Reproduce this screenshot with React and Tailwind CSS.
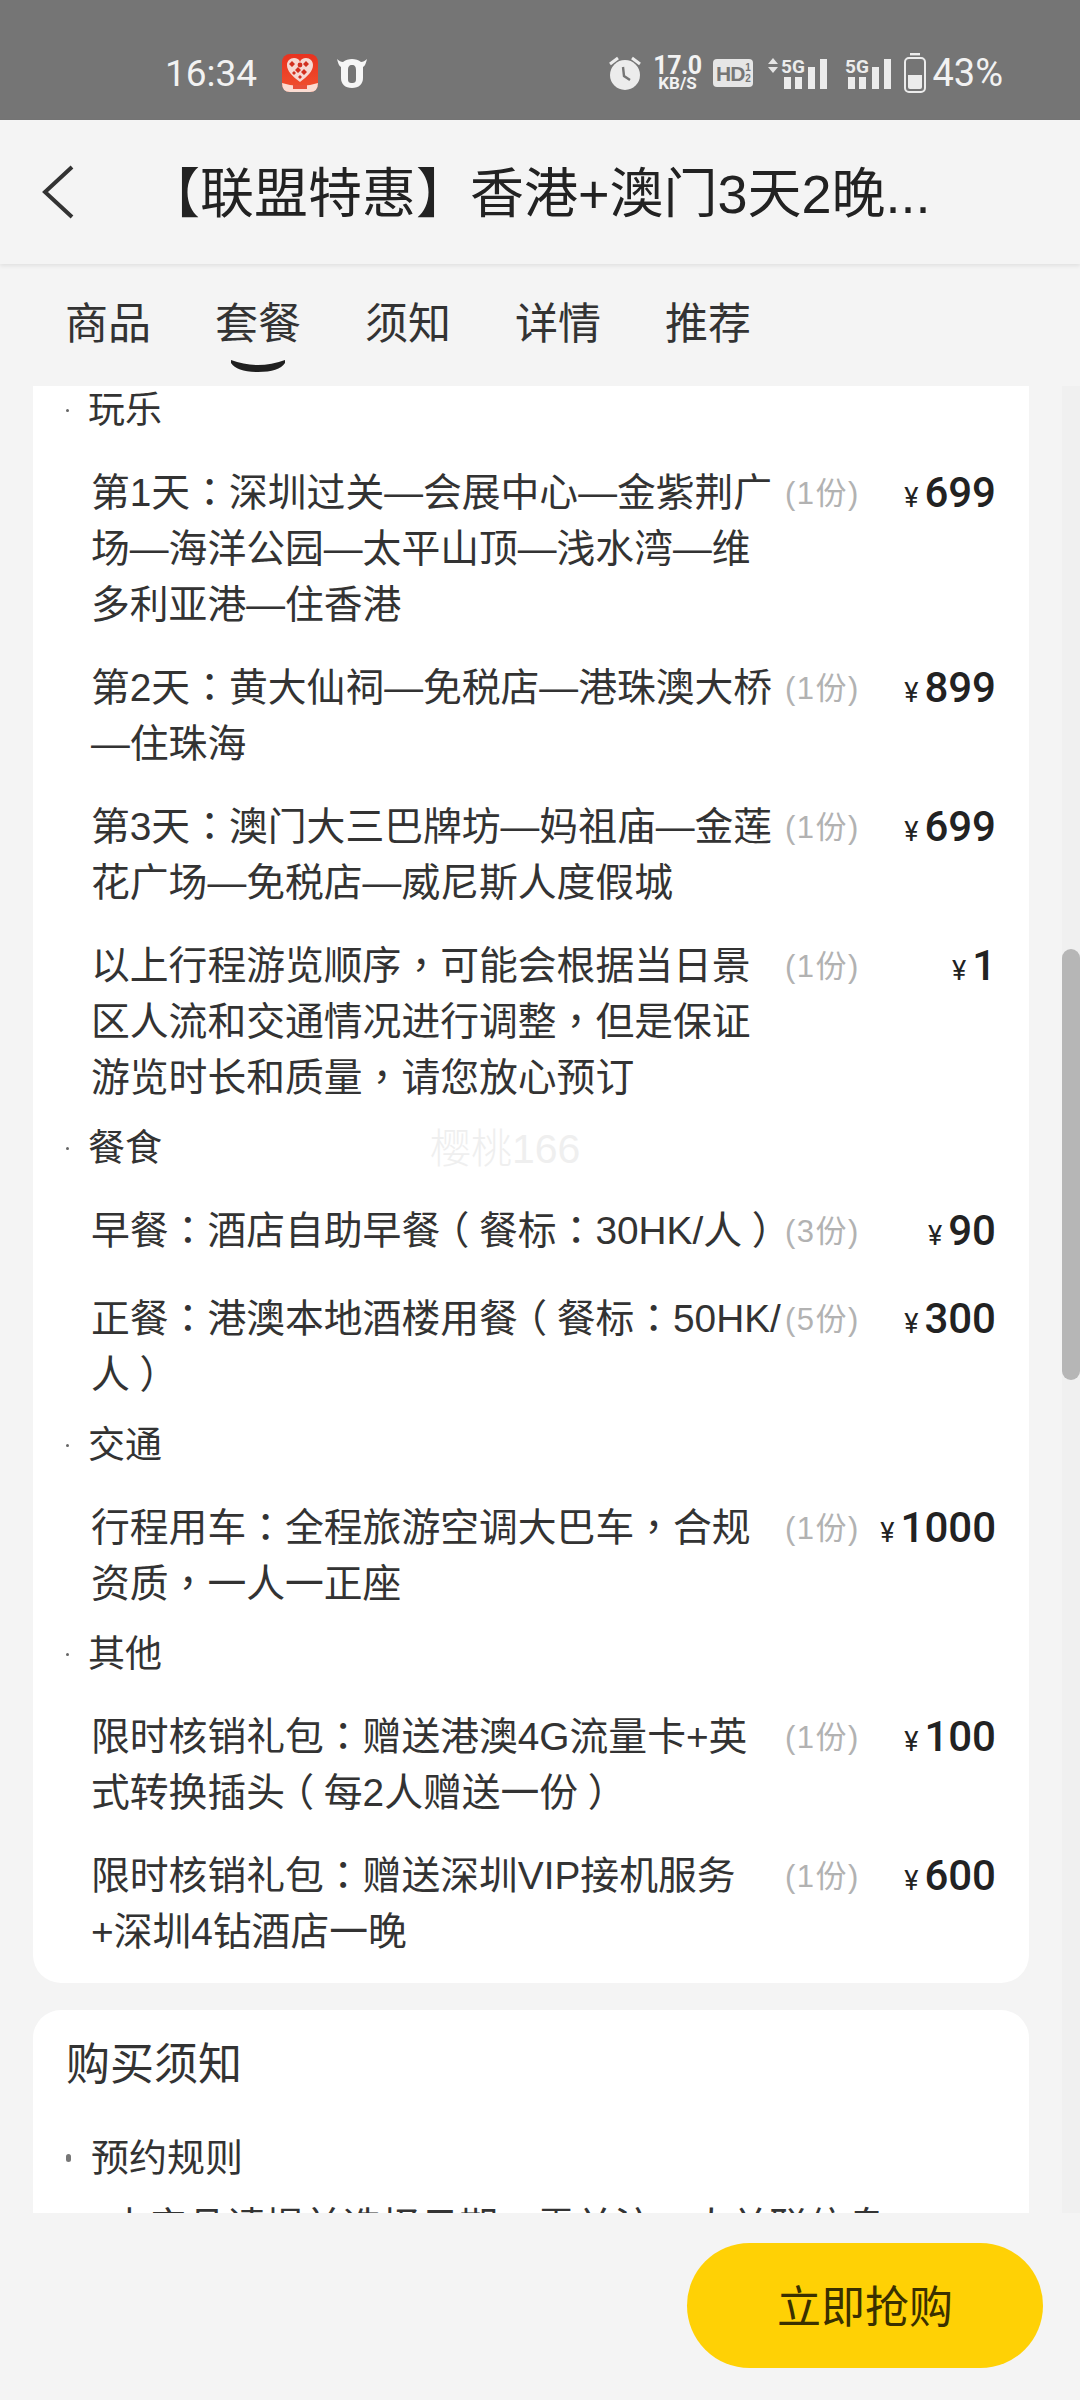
import React from 'react';

const groups = [
  {
    title: '玩乐',
    rows: [
      { text: '第1天：深圳过关—会展中心—金紫荆广场—海洋公园—太平山顶—浅水湾—维多利亚港—住香港', qty: 1, price: 699 },
      { text: '第2天：黄大仙祠—免税店—港珠澳大桥—住珠海', qty: 1, price: 899 },
      { text: '第3天：澳门大三巴牌坊—妈祖庙—金莲花广场—免税店—威尼斯人度假城', qty: 1, price: 699 },
      { text: '以上行程游览顺序，可能会根据当日景区人流和交通情况进行调整，但是保证游览时长和质量，请您放心预订', qty: 1, price: 1 },
    ],
  },
  {
    title: '餐食',
    rows: [
      { text: '早餐：酒店自助早餐（餐标：30HK/人）', qty: 3, price: 90 },
      { text: '正餐：港澳本地酒楼用餐（餐标：50HK/人）', qty: 5, price: 300 },
    ],
  },
  {
    title: '交通',
    rows: [{ text: '行程用车：全程旅游空调大巴车，合规资质，一人一正座', qty: 1, price: 1000 }],
  },
  {
    title: '其他',
    rows: [
      { text: '限时核销礼包：赠送港澳4G流量卡+英式转换插头（每2人赠送一份）', qty: 1, price: 100 },
      { text: '限时核销礼包：赠送深圳VIP接机服务+深圳4钻酒店一晚', qty: 1, price: 600 },
    ],
  },
];

// punctuation sits centred in the em box in the reference
const Punct = ({ text }) =>
  text.split(/([：，（）])/).map((part, i) => {
    if (part === '（') return <span key={i} className="relative -left-[0.25em]">{part}</span>;
    if (part === '）') return <span key={i} className="relative left-[0.25em]">{part}</span>;
    if (part === '：' || part === '，')
      return <span key={i} className="leading-none font-['Noto_Sans_CJK_TC']">{part}</span>;
    return part;
  });

const AppIcon = () => (
  <svg width="36" height="38" viewBox="0 0 36 38">
    <defs>
      <linearGradient id="red" x1="0" y1="0" x2="0" y2="1">
        <stop offset="0" stopColor="#e8321f" />
        <stop offset="1" stopColor="#f0522f" />
      </linearGradient>
    </defs>
    <rect width="36" height="38" rx="8" fill="url(#red)" />
    <path d="M0 29q18 6 36 0q0 9-8 9H8q-8 0-8-9z" fill="#fbdcd2" />
    <path d="M18 28C10 22 5 17 5 11c0-4 3-7 7-7 3 0 5 1 6 4 1-3 3-4 6-4 4 0 7 3 7 7 0 6-5 11-13 17z" fill="#f7d9d2" />
    <path d="M10 7l3 3-3 3-3-3zM16 13l3 3-3 3-3-3zM24 7l3 3-3 3-3-3zM22 15l3 3-3 3-3-3zM12 17l2 2-2 2-2-2zM18 21l2 2-2 2-2-2z" fill="#d2301f" />
    <circle cx="18" cy="11" r="2.4" fill="#d2301f" />
    <rect x="11" y="31" width="14" height="4" fill="#e8503a" />
  </svg>
);

const Cow = () => (
  <svg width="30" height="30" viewBox="0 0 30 30">
    <path
      fillRule="evenodd"
      d="M0 1c1 4 2 7 4 8v11c0 6 4 10 11 10s11-4 11-10V9c2-1 3-4 4-8-2 2-4 3-6 3-2-2-6-3-9-3S8 2 6 4C4 4 2 3 0 1zM15 7c3 0 4 2 4 5v9c0 3-1 4-4 4s-4-1-4-4v-9c0-3 1-5 4-5z"
      fill="#f6f6f6"
    />
  </svg>
);

const Alarm = () => (
  <svg width="32" height="34" viewBox="0 0 32 34">
    <circle cx="16" cy="19" r="15" fill="#ececec" />
    <path d="M14 11l1 9 6 4" fill="none" stroke="#757575" strokeWidth="2.4" />
    <path d="M1 8l8-6M31 8l-8-6" stroke="#ececec" strokeWidth="3" />
  </svg>
);

const Signal = ({ arrows }) => (
  <svg width={arrows ? 62 : 50} height="32" viewBox={`${arrows ? -16 : -2} 0 ${arrows ? 62 : 50} 32`}>
    {arrows && <path d="M-15 7l5-6 5 6zM-15 10l5 6 5-6z" fill="#e4e4e4" />}
    <text x="-2" y="16" fontSize="19" fontWeight="700" fill="#ececec" fontFamily="Roboto">
      5G
    </text>
    <rect x="1" y="20" width="7" height="12" fill="#ececec" />
    <rect x="12" y="20" width="7" height="12" fill="#ececec" />
    <rect x="25" y="10" width="7" height="22" fill="#ececec" />
    <rect x="37" y="2" width="7" height="30" fill="#ececec" />
  </svg>
);

const Battery = () => (
  <svg width="22" height="40" viewBox="0 0 22 40">
    <rect x="6" y="0" width="10" height="2.4" fill="#ececec" />
    <rect x="1" y="5" width="20" height="34" rx="4" fill="none" stroke="#ececec" strokeWidth="2" />
    <path d="M4 22h14v12a2 2 0 0 1-2 2H6a2 2 0 0 1-2-2z" fill="#ececec" />
  </svg>
);

const StatusBar = () => (
  <div className="h-[120px] shrink-0 bg-[#757575] flex items-center justify-between pt-[26px] pl-[165px] pr-[77px] text-[#f2f2f2] font-['Roboto']">
    <div className="flex items-center">
      <span className="text-[37px] leading-none w-[117px]">16:34</span>
      <AppIcon />
      <span className="ml-[19px] flex">
        <Cow />
      </span>
    </div>
    <div className="flex items-center">
      <Alarm />
      <div className="ml-[14px] w-[44px] flex flex-col items-center font-bold">
        <span className="text-[25px] leading-[21px] tracking-[-0.5px]">17.0</span>
        <span className="text-[17px] leading-[15px]">KB/S</span>
      </div>
      <div className="ml-[14px] w-[40px] h-[28px] rounded-[4px] bg-[#e6e6e6] text-[#757575] font-bold flex items-center justify-center font-['Liberation_Sans']">
        <span className="text-[21px] leading-none tracking-[-1px]">HD</span>
        <span className="text-[10px] leading-[11px] flex flex-col ml-[1px]">
          <span>1</span>
          <span>2</span>
        </span>
      </div>
      <div className="ml-[14px] flex">
        <Signal arrows />
      </div>
      <div className="ml-[16px] flex">
        <Signal />
      </div>
      <div className="ml-[9px] flex">
        <Battery />
      </div>
      <span className="ml-[6px] text-[38px] leading-none">43%</span>
    </div>
  </div>
);

const Row = ({ row }) => (
  <div className="flex items-start mt-[27px] pl-[58px] pr-[33px]">
    <div className="w-[692px] shrink-0 text-[38.8px] leading-[56px]">
      <Punct text={row.text} />
    </div>
    <div className="ml-[2px] text-[31px] tracking-[1.5px] leading-[58px] text-[#b2b2b2] whitespace-nowrap">
      ({row.qty}份)
    </div>
    <div className="flex-1 flex justify-end items-baseline font-['Roboto'] font-medium text-[#222] leading-[56px]">
      <span className="text-[27px] font-normal mr-[6px]">¥</span>
      <span className="text-[42px]">{row.price}</span>
    </div>
  </div>
);

const Heading = ({ title, first }) => (
  <div className={`flex items-center pl-[33px] h-[55px] ${first ? '' : 'mt-[15px]'}`}>
    <span className="w-[3px] h-[3px] rounded-full bg-[#666]" />
    <span className="ml-[19px] text-[37px]">{title}</span>
  </div>
);

const Tab = ({ label, active }) => (
  <div className="w-[86px] flex flex-col items-center text-[43px] leading-[56px]">
    {label}
    {active && (
      <svg className="mt-[8px]" width="54" height="12" viewBox="0 0 54 12">
        <path d="M0 0q27 10 54 0v3q-6 9-27 9T0 3z" fill="#1f1f1f" />
      </svg>
    )}
  </div>
);

export default function App() {
  return (
    <div className="w-[1080px] h-[2400px] flex flex-col overflow-hidden bg-[#f4f4f4] text-[#333] font-['Liberation_Sans','Noto_Sans_CJK_SC',sans-serif]">
      <StatusBar />

      <div className="h-[144px] shrink-0 flex items-center relative z-10 shadow-[0_2px_4px_rgba(0,0,0,0.08)]">
        <svg className="ml-[42px]" width="32" height="54" viewBox="0 0 32 54">
          <path d="M30 2L3 27l27 25" fill="none" stroke="#333" strokeWidth="4" />
        </svg>
        <div className="ml-[72px] pt-[4px] text-[54px] leading-none text-[#222] whitespace-nowrap">【联盟特惠】香港+澳门3天2晚...</div>
      </div>

      <div className="h-[122px] shrink-0 flex items-start gap-[64px] pl-[65px] pt-[32px]">
        <Tab label="商品" />
        <Tab label="套餐" active />
        <Tab label="须知" />
        <Tab label="详情" />
        <Tab label="推荐" />
      </div>

      <div className="h-[1827px] shrink-0 flex overflow-hidden">
        <div className="flex-1 min-w-0 pl-[33px] pr-[33px] -mt-[3px]">
          <div className="relative bg-white rounded-b-[28px] pb-[23px]">
            {groups.map((group, i) => (
              <div key={group.title}>
                <Heading title={group.title} first={i === 0} />
                {group.rows.map((row, j) => (
                  <Row key={j} row={row} />
                ))}
              </div>
            ))}
            <div className="absolute left-[397px] top-[746px] text-[41px] leading-none text-[#efefef] font-light">樱桃166</div>
          </div>

          <div className="mt-[27px] bg-white rounded-t-[28px] pl-[33px] pt-[27px]">
            <div className="text-[44px] leading-[56px]">购买须知</div>
            <div className="flex items-center mt-[37px] h-[56px]">
              <span className="w-[5px] h-[8px] rounded-full bg-[#777]" />
              <span className="ml-[20px] text-[38px]">预约规则</span>
            </div>
            <div className="mt-[13px] ml-[44px] text-[38.8px] leading-[56px] whitespace-nowrap">
              本产品请提前选择日期，需关注一人关联信息
            </div>
          </div>
        </div>
        <div className="w-[18px] shrink-0 bg-[#f0f0f0]">
          <div className="mt-[563px] h-[431px] rounded-full bg-[#b6b6b6]" />
        </div>
      </div>

      <div className="flex-1 flex justify-end items-start pt-[30px] pr-[37px]">
        <div className="w-[356px] h-[125px] rounded-full bg-[#ffd105] flex items-center justify-center pt-[4px] text-[44px] text-[#3a3000]">立即抢购</div>
      </div>
    </div>
  );
}
